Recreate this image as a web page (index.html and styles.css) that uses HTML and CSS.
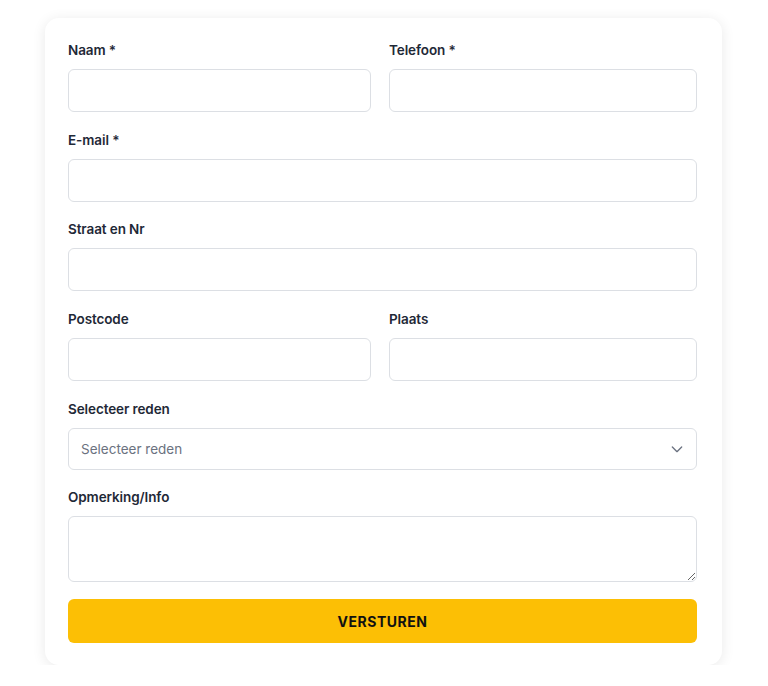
FILE: index.html
```html
<!DOCTYPE html>
<html lang="nl">
<head>
    <meta charset="UTF-8">
    <meta name="viewport" content="width=device-width, initial-scale=1.0">
    <title>Contactformulier</title>
    <link rel="stylesheet" href="styles.css">
</head>
<body>
    <form class="form-card">
        <div class="form-row">
            <div class="field">
                <label for="naam">Naam *</label>
                <input type="text" id="naam">
            </div>
            <div class="field">
                <label for="telefoon">Telefoon *</label>
                <input type="tel" id="telefoon">
            </div>
        </div>

        <div class="field">
            <label for="email">E-mail *</label>
            <input type="email" id="email">
        </div>

        <div class="field">
            <label for="straat">Straat en Nr</label>
            <input type="text" id="straat">
        </div>

        <div class="form-row">
            <div class="field">
                <label for="postcode">Postcode</label>
                <input type="text" id="postcode">
            </div>
            <div class="field">
                <label for="plaats">Plaats</label>
                <input type="text" id="plaats">
            </div>
        </div>

        <div class="field field-select">
            <label for="reden">Selecteer reden</label>
            <div class="select-wrap">
                <select id="reden">
                    <option>Selecteer reden</option>
                </select>
                <svg class="chevron" width="16" height="16" viewBox="0 0 24 24" fill="none" stroke="#6b7280" stroke-width="2" stroke-linecap="round" stroke-linejoin="round">
                    <path d="M5 9l7 7 7-7"/>
                </svg>
            </div>
        </div>

        <div class="field">
            <label for="info">Opmerking/Info</label>
            <textarea id="info"></textarea>
        </div>

        <button type="submit" class="submit-btn">VERSTUREN</button>
    </form>
</body>
</html>
```

FILE: styles.css
```css
body {
    margin: 0;
    background: #ffffff;
    font-family: Inter, "Noto Sans", Arial, sans-serif;
    color: #1f2937;
}

/* Kaart met formulier */
.form-card {
    width: 677px;
    margin: 18px 0 0 45px;
    padding: 22px 25px 22px 23px;
    box-sizing: border-box;
    background: #ffffff;
    border-radius: 14px;
    box-shadow: 0 2px 14px rgba(0, 0, 0, 0.09);
}

/* Twee kolommen */
.form-row {
    display: grid;
    grid-template-columns: 303px 1fr;
    gap: 18px;
}

.field {
    display: flex;
    flex-direction: column;
    margin-bottom: 17.7px;
}

.field label {
    font-size: 13.5px;
    font-weight: 600;
    letter-spacing: -0.1px;
    line-height: 20px;
    margin-bottom: 9px;
    color: #1f2937;
}

.field input,
.field select,
.field textarea {
    height: 43px;
    border: 1px solid #dcdfe4;
    border-radius: 6px;
    background: #ffffff;
    box-sizing: border-box;
    font-family: inherit;
    font-size: 13px;
    padding: 0 12px;
    outline: none;
}

.field-select {
    margin-bottom: 17px;
}

/* Select met eigen pijltje */
.select-wrap {
    position: relative;
}

.select-wrap select {
    width: 100%;
    height: 42px;
    appearance: none;
    -webkit-appearance: none;
    color: #6b7280;
    font-size: 13.5px;
}

.chevron {
    position: absolute;
    right: 12px;
    top: 13px;
    pointer-events: none;
}

.field textarea {
    height: 66px;
    padding: 10px 12px;
    resize: vertical;
}

.submit-btn {
    width: 100%;
    height: 44px;
    border: none;
    border-radius: 6px;
    background: #fcbf05;
    color: #111111;
    font-family: inherit;
    font-size: 14px;
    font-weight: 700;
    letter-spacing: 0.5px;
    cursor: pointer;
}
```
